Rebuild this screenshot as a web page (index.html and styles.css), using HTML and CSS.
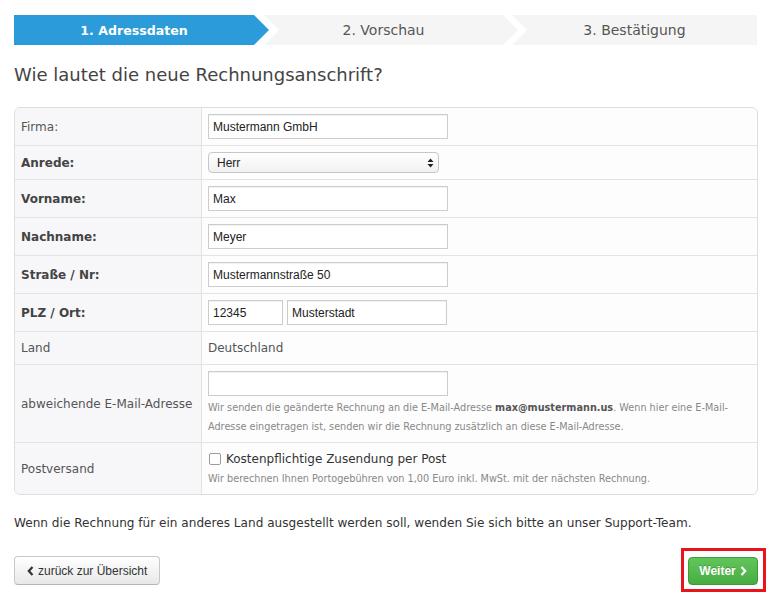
FILE: index.html
```html
<!DOCTYPE html>
<html lang="de">
<head>
<meta charset="utf-8">
<title>Rechnungsanschrift</title>
<link rel="stylesheet" href="styles.css">
</head>
<body>
<div class="page">
  <nav class="steps">
    <div class="step step-first step-active">1. Adressdaten</div>
    <div class="step step-mid">2. Vorschau</div>
    <div class="step step-last">3. Bestätigung</div>
  </nav>

  <h1 class="title">Wie lautet die neue Rechnungsanschrift?</h1>

  <div class="form">
    <div class="form-row">
      <div class="label">Firma:</div>
      <div class="field"><input class="input" type="text" value="Mustermann GmbH"></div>
    </div>
    <div class="form-row">
      <div class="label label-req">Anrede:</div>
      <div class="field">
        <span class="select-wrap">
          <select class="select"><option>Herr</option><option>Frau</option></select>
          <svg class="select-arrows" width="7" height="10" viewBox="0 0 7 10"><path d="M3.5 0.5 L6.5 4 H0.5 Z M3.5 9.5 L6.5 6 H0.5 Z" fill="#222"/></svg>
        </span>
      </div>
    </div>
    <div class="form-row">
      <div class="label label-req">Vorname:</div>
      <div class="field"><input class="input" type="text" value="Max"></div>
    </div>
    <div class="form-row">
      <div class="label label-req">Nachname:</div>
      <div class="field"><input class="input" type="text" value="Meyer"></div>
    </div>
    <div class="form-row">
      <div class="label label-req">Straße / Nr:</div>
      <div class="field"><input class="input" type="text" value="Mustermannstraße 50"></div>
    </div>
    <div class="form-row">
      <div class="label label-req">PLZ / Ort:</div>
      <div class="field field-split">
        <input class="input input-zip" type="text" value="12345">
        <input class="input input-city" type="text" value="Musterstadt">
      </div>
    </div>
    <div class="form-row">
      <div class="label">Land</div>
      <div class="field field-text">Deutschland</div>
    </div>
    <div class="form-row">
      <div class="label">abweichende E-Mail-Adresse</div>
      <div class="field">
        <input class="input" type="text" value="">
        <p class="help help-email">Wir senden die geänderte Rechnung an die E-Mail-Adresse <b>max@mustermann.us</b>. Wenn hier eine E-Mail-<br>Adresse eingetragen ist, senden wir die Rechnung zusätzlich an diese E-Mail-Adresse.</p>
      </div>
    </div>
    <div class="form-row">
      <div class="label">Postversand</div>
      <div class="field">
        <label class="check"><input class="checkbox" type="checkbox">Kostenpflichtige Zusendung per Post</label>
        <p class="help">Wir berechnen Ihnen Portogebühren von 1,00 Euro inkl. MwSt. mit der nächsten Rechnung.</p>
      </div>
    </div>
  </div>

  <p class="note">Wenn die Rechnung für ein anderes Land ausgestellt werden soll, wenden Sie sich bitte an unser Support-Team.</p>

  <div class="actions">
    <button class="btn btn-back" type="button">
      <svg class="chev" width="7" height="10" viewBox="0 0 7 10"><path d="M5.5 1 L1.8 5 L5.5 9" fill="none" stroke="#333" stroke-width="2.2"/></svg>
      zurück zur Übersicht
    </button>
    <span class="highlight">
      <button class="btn btn-next" type="button">
        Weiter
        <svg class="chev" width="7" height="10" viewBox="0 0 7 10"><path d="M1.5 1 L5.2 5 L1.5 9" fill="none" stroke="#fff" stroke-width="2.2"/></svg>
      </button>
    </span>
  </div>
</div>
</body>
</html>
```

FILE: styles.css
```css
html, body {
  margin: 0;
  padding: 0;
  background: #fff;
}

.page {
  padding: 15px 15px 16px 14px;
  font-family: "DejaVu Sans", Verdana, sans-serif;
  font-size: 12px;
  color: #333;
}

/* Steps */
.steps {
  display: flex;
  height: 30px;
  margin-right: 1px;
}

.step {
  display: flex;
  align-items: center;
  justify-content: center;
  background: #f5f5f5;
  color: #555;
  font-size: 14px;
}

.step-first {
  flex: 0 0 255px;
  padding-right: 15px;
  box-sizing: border-box;
  clip-path: polygon(0 0, calc(100% - 15px) 0, 100% 50%, calc(100% - 15px) 100%, 0 100%);
}

.step-mid {
  flex: 0 0 254px;
  margin-left: -5px;
  padding-right: 15px;
  box-sizing: border-box;
  clip-path: polygon(0 0, calc(100% - 15px) 0, 100% 50%, calc(100% - 15px) 100%, 0 100%, 15px 50%);
}

.step-last {
  flex: 1 1 auto;
  margin-left: -6px;
  clip-path: polygon(0 0, 100% 0, 100% 100%, 0 100%, 15px 50%);
}

.step-active {
  background: #2b9bd9;
  color: #fff;
  font-weight: bold;
  font-size: 12.6px;
}

/* Heading */
.title {
  margin: 19px 0 21px;
  font-size: 18px;
  line-height: 22px;
  font-weight: normal;
  color: #444;
}

/* Form */
.form {
  border: 1px solid #dedede;
  border-radius: 6px;
  overflow: hidden;
  background: #fdfdfd;
}

.form-row {
  display: grid;
  grid-template-columns: 187px 1fr;
}

.form-row + .form-row {
  border-top: 1px solid #e3e3e3;
}

.label {
  display: flex;
  align-items: center;
  padding: 6px;
  background: #f7f7f9;
  border-right: 1px solid #e3e3e3;
  color: #555;
  line-height: 20px;
}

.label-req {
  font-weight: bold;
  color: #444;
}

.field {
  padding: 6px;
}

.field-split {
  display: flex;
  gap: 4px;
}

.field-text {
  line-height: 20px;
  color: #555;
}

.input {
  display: block;
  box-sizing: border-box;
  width: 240px;
  height: 25px;
  margin: 0;
  padding: 0 4px;
  border: 1px solid #ccc;
  border-radius: 0;
  box-shadow: inset 0 1px 1px rgba(0, 0, 0, 0.06);
  background: #fff;
  font-family: "Liberation Sans", Arial, sans-serif;
  font-size: 12px;
  color: #222;
}

.input-zip {
  width: 75px;
}

.input-city {
  width: 160px;
}

.select-wrap {
  position: relative;
  display: block;
  width: 231px;
}

.select {
  display: block;
  box-sizing: border-box;
  width: 231px;
  height: 21px;
  margin: 0;
  padding: 0 8px;
  border: 1px solid #c6c6c6;
  border-radius: 4px;
  background: linear-gradient(#ffffff, #f1f1f1);
  -webkit-appearance: none;
  appearance: none;
  font-family: "Liberation Sans", Arial, sans-serif;
  font-size: 12px;
  color: #222;
}

.select-arrows {
  position: absolute;
  right: 5px;
  top: 6px;
  pointer-events: none;
}

.help {
  margin: 2px 0 0;
  font-size: 9.7px;
  line-height: 19px;
  color: #888;
  white-space: nowrap;
}

.help b {
  color: #555;
}

.check {
  display: flex;
  align-items: center;
  height: 20px;
  color: #333;
}

.checkbox {
  -webkit-appearance: none;
  appearance: none;
  box-sizing: border-box;
  width: 12px;
  height: 12px;
  margin: 0 5px 0 1px;
  border: 1px solid #9a9a9a;
  border-radius: 2px;
  background: #fff;
}

.check + .help {
  margin-top: 0;
}

/* Note */
.note {
  margin: 18px 0 23px;
  font-size: 12.1px;
  line-height: 20px;
  color: #333;
}

/* Actions */
.actions {
  display: flex;
  justify-content: space-between;
  align-items: flex-start;
}

.btn {
  display: inline-flex;
  align-items: center;
  gap: 4px;
  height: 29px;
  margin: 0;
  border-radius: 4px;
  font-family: "Liberation Sans", Arial, sans-serif;
  font-size: 12px;
  cursor: pointer;
}

.btn-back {
  padding: 0 11px 0 12px;
  width: 146px;
  border: 1px solid #c8c8c8;
  border-bottom-color: #b5b5b5;
  background: linear-gradient(#ffffff, #e8e8e8);
  color: #333;
}

.highlight {
  position: relative;
  display: block;
  margin-top: 1px;
}

.highlight::after {
  content: "";
  position: absolute;
  left: -7px;
  right: -8px;
  top: -9px;
  bottom: -7px;
  border: 3px solid #e8141b;
  pointer-events: none;
}

.btn-next {
  width: 70px;
  height: 28px;
  justify-content: center;
  padding: 0;
  border: 1px solid #3f9a3a;
  background: linear-gradient(#62c55c, #47ad41);
  color: #fff;
  font-weight: bold;
  text-shadow: 0 -1px 0 rgba(0, 0, 0, 0.2);
}

.chev {
  flex: none;
}
```
